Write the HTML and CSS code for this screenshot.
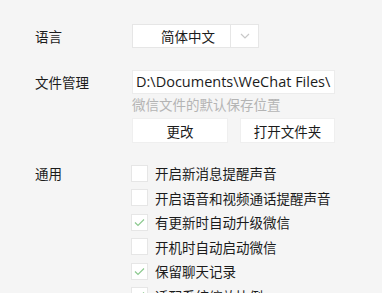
FILE: index.html
```html
<!DOCTYPE html>
<html>
  <head>
    <meta charset="utf-8">
    <link rel="stylesheet" href="styles.css">
  </head>
  <body>
    <div class="settings">
      <div class="row row-lang">
        <div class="label">语言</div>
        <div class="select">
          <span class="select-value">简体中文</span>
          <span class="select-arrow">
            <svg width="12" height="8" viewBox="0 0 12 8"><polyline points="2,2 6,6 10,2" fill="none" stroke="#c8c8c8" stroke-width="1.2"/></svg>
          </span>
        </div>
      </div>

      <div class="row row-files">
        <div class="label">文件管理</div>
        <div class="field">
          <div class="path">D:\Documents\WeChat Files\</div>
          <div class="hint">微信文件的默认保存位置</div>
          <div class="buttons">
            <button class="btn btn-change">更改</button>
            <button class="btn btn-open">打开文件夹</button>
          </div>
        </div>
      </div>

      <div class="row row-general">
        <div class="label">通用</div>
        <ul class="options">
          <li><span class="box"></span>开启新消息提醒声音</li>
          <li><span class="box"></span>开启语音和视频通话提醒声音</li>
          <li><span class="box checked"><svg width="17" height="17" viewBox="0 0 17 17"><polyline points="4,8.5 7,11.5 13,5.5" fill="none" stroke="#8cc98f" stroke-width="1.2"/></svg></span>有更新时自动升级微信</li>
          <li><span class="box"></span>开机时自动启动微信</li>
          <li><span class="box checked"><svg width="17" height="17" viewBox="0 0 17 17"><polyline points="4,8.5 7,11.5 13,5.5" fill="none" stroke="#8cc98f" stroke-width="1.2"/></svg></span>保留聊天记录</li>
          <li><span class="box checked"><svg width="17" height="17" viewBox="0 0 17 17"><polyline points="4,8.5 7,11.5 13,5.5" fill="none" stroke="#8cc98f" stroke-width="1.2"/></svg></span>适配系统缩放比例</li>
        </ul>
      </div>
    </div>
  </body>
</html>
```

FILE: styles.css
```css
html, body {
  margin: 0;
  padding: 0;
  background-color: #f5f5f5;
  overflow: hidden;
}

body {
  font-family: "Noto Sans CJK SC", "Noto Sans", sans-serif;
  font-size: 13.5px;
  color: #1b1b1b;
}

.settings {
  padding-top: 24px;
}

.row {
  display: flex;
}

.label {
  width: 97px;
  padding-left: 35px;
  line-height: 24px;
  height: 24px;
}

.select {
  display: flex;
  width: 125px;
  height: 22px;
  background: #fff;
  border: 1px solid #e6e6e6;
}

.select-value {
  width: 98px;
  padding-left: 28px;
  box-sizing: border-box;
  line-height: 22px;
  border-right: 1px solid #e6e6e6;
}

.select-arrow {
  flex: 1;
  display: flex;
  align-items: center;
  justify-content: center;
}

.row-files {
  margin-top: 22px;
}

.path {
  width: 203px;
  height: 24px;
  box-sizing: border-box;
  background: #fff;
  border: 1px solid #ececec;
  padding-left: 3px;
  font-family: "Open Sans", "Noto Sans", sans-serif;
  font-size: 14.5px;
  line-height: 22px;
  white-space: nowrap;
  overflow: hidden;
}

.hint {
  color: #b4b4b4;
  height: 20px;
  line-height: 20px;
  margin-top: 0;
}

.buttons {
  display: flex;
  gap: 12px;
  margin-top: 4px;
}

.btn {
  height: 25px;
  background: #fff;
  border: 1px solid #efefef;
  font-family: inherit;
  font-size: 13.5px;
  color: #1b1b1b;
  padding: 0;
}

.btn-change {
  width: 96px;
}

.btn-open {
  width: 95px;
}

.row-general {
  margin-top: 18px;
}

.row-general .label {
  line-height: 24.5px;
}

.options {
  list-style: none;
  margin: 0;
  padding: 0;
}

.options li {
  display: flex;
  align-items: center;
  height: 24.5px;
}

.box {
  width: 17px;
  height: 17px;
  box-sizing: border-box;
  background: #fff;
  border: 1px solid #e6e6e6;
  margin-left: -1px;
  margin-right: 7px;
  display: flex;
  align-items: center;
  justify-content: center;
}

.box svg {
  flex: none;
}
```
